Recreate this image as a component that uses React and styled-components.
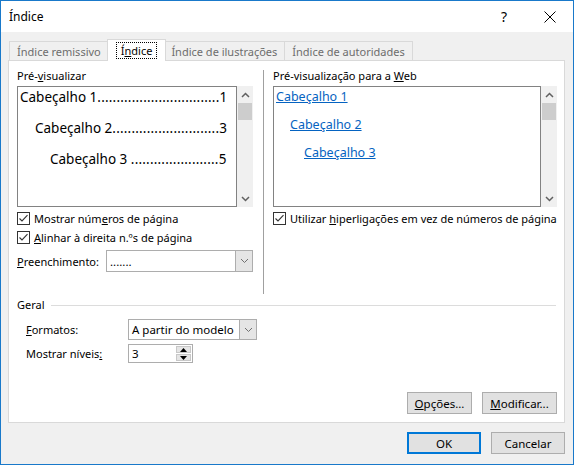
import React from "react";
import styled, { createGlobalStyle, css } from "styled-components";

const GlobalStyle = createGlobalStyle`
  body {
    margin: 0;
    font-family: "Noto Sans", "Open Sans", sans-serif;
    font-size: 11px;
    color: #000;
  }
`;

const Window = styled.div`
  width: 574px;
  height: 465px;
  box-sizing: border-box;
  border: 1px solid #1979ca;
  background: #f0f0f0;
  display: flex;
  flex-direction: column;
`;

const TitleBar = styled.div`
  height: 31px;
  flex: 0 0 31px;
  background: #fff;
  display: flex;
  align-items: center;
  padding-left: 8px;
`;

const TitleText = styled.div`
  flex: 1;
  font-size: 12px;
`;

const TitleButton = styled.div`
  width: 46px;
  height: 31px;
  display: flex;
  align-items: center;
  justify-content: center;
  font-size: 14px;
`;

const Body = styled.div`
  flex: 1;
  display: flex;
  flex-direction: column;
  padding: 0 8px 0 7px;
`;

const TabStrip = styled.div`
  height: 28px;
  flex: 0 0 28px;
  display: flex;
  align-items: flex-end;
  padding-left: 2px;
  position: relative;
  z-index: 1;
`;

const Tab = styled.div`
  height: 19px;
  box-sizing: border-box;
  border: 1px solid #d9d9d9;
  border-bottom: none;
  background: #f0f0f0;
  color: #6d6d6d;
  padding: 0 7px;
  display: flex;
  align-items: center;
  margin-left: -1px;
  ${({ $active }) =>
    $active &&
    css`
      height: 22px;
      margin: 0 -2px -1px -2px;
      padding: 0 8px;
      background: #fff;
      color: #000;
      position: relative;
      z-index: 2;
    `}
`;

const Focus = styled.span`
  border: 1px dotted #000;
  padding: 0 4px;
  line-height: 15px;
`;

const Panel = styled.div`
  flex: 0 0 363px;
  box-sizing: border-box;
  border: 1px solid #d9d9d9;
  background: #fff;
  padding: 7px 6px 8px 8px;
  display: flex;
  flex-direction: column;
`;

const TopSection = styled.div`
  display: flex;
  height: 226px;
`;

const Column = styled.div`
  width: ${({ $w }) => $w}px;
  flex: 0 0 ${({ $w }) => $w}px;
  min-width: 0;
  display: flex;
  flex-direction: column;
`;

const Separator = styled.div`
  width: 1px;
  background: #a0a0a0;
  margin: 2px 9px 0 10px;
`;

const Label = styled.div`
  height: 16px;
  line-height: 16px;
  white-space: nowrap;
`;

const U = styled.span`
  text-decoration: underline;
`;

const PreviewRow = styled.div`
  display: flex;
  height: 121px;
  margin-top: 2px;
`;

const PreviewBox = styled.div`
  flex: 1;
  min-width: 0;
  box-sizing: border-box;
  border: 1px solid #828282;
  display: flex;
  flex-direction: column;
  gap: ${({ $gap }) => $gap}px;
  padding-right: 10px;
`;

const TocLine = styled.div`
  display: flex;
  font-size: 13.5px;
  line-height: 20px;
  padding-left: ${({ $indent }) => $indent}px;
  white-space: nowrap;
`;

const Leader = styled.span`
  flex: 1;
  text-align: right;
  letter-spacing: 0.2px;
`;

const WebLink = styled.a`
  font-size: 12.5px;
  line-height: 19px;
  color: #0563c1;
  text-decoration: underline;
  padding-left: ${({ $indent }) => $indent}px;
  white-space: nowrap;
`;

const Scrollbar = styled.div`
  width: 16px;
  flex: 0 0 16px;
  background: #f0f0f0;
  display: flex;
  flex-direction: column;
  align-items: center;
`;

const ScrollArrow = styled.div`
  height: 17px;
  display: flex;
  align-items: center;
  justify-content: center;
`;

const Thumb = styled.div`
  width: 14px;
  height: 17px;
  background: #cdcdcd;
`;

const ScrollTrack = styled.div`
  flex: 1;
`;

const CheckRow = styled.div`
  display: flex;
  align-items: center;
  gap: 4px;
  height: 19px;
  white-space: nowrap;
  margin-top: ${({ $mt }) => $mt || 0}px;
`;

const Box = styled.div`
  width: 13px;
  height: 13px;
  box-sizing: border-box;
  border: 1px solid #333;
  background: #fff;
  display: flex;
  align-items: center;
  justify-content: center;
`;

const FieldRow = styled.div`
  display: flex;
  align-items: center;
  margin-top: ${({ $mt }) => $mt || 0}px;
  padding-left: ${({ $pl }) => $pl || 0}px;
`;

const FieldLabel = styled.div`
  width: ${({ $w }) => $w}px;
  white-space: nowrap;
`;

const Select = styled.div`
  width: ${({ $w }) => $w}px;
  height: ${({ $h }) => $h}px;
  box-sizing: border-box;
  border: 1px solid #adadad;
  background: #fff;
  display: flex;
  align-items: stretch;
`;

const SelectValue = styled.div`
  flex: 1;
  display: flex;
  align-items: center;
  padding-left: 3px;
  font-size: 11.5px;
`;

const DropButton = styled.div`
  width: 16px;
  background: #e5e5e5;
  border-left: 1px solid #adadad;
  display: flex;
  align-items: center;
  justify-content: center;
`;

const SpinBox = styled.div`
  width: 65px;
  height: 19px;
  box-sizing: border-box;
  border: 1px solid #adadad;
  background: #fff;
  display: flex;
  align-items: stretch;
  padding: 1px 1px 1px 0;
`;

const SpinButtons = styled.div`
  width: 15px;
  display: flex;
  flex-direction: column;
  gap: 1px;
`;

const SpinButton = styled.div`
  flex: 1;
  background: #e5e5e5;
  border: 1px solid #c8c8c8;
  display: flex;
  align-items: center;
  justify-content: center;
`;

const GroupHeader = styled.div`
  display: flex;
  align-items: center;
  gap: 6px;
  margin-top: 3px;
  padding-right: 2px;
`;

const GroupLine = styled.div`
  flex: 1;
  height: 1px;
  background: #dcdcdc;
`;

const ButtonRow = styled.div`
  display: flex;
  justify-content: flex-end;
  gap: 10px;
  margin-top: auto;
  padding-right: 1px;
`;

const Button = styled.div`
  width: ${({ $w }) => $w || 75}px;
  height: 22px;
  box-sizing: border-box;
  border: ${({ $default }) =>
    $default ? "2px solid #0078d7" : "1px solid #adadad"};
  background: #e1e1e1;
  display: flex;
  align-items: center;
  justify-content: center;
  white-space: nowrap;
  font-size: 11.5px;
`;

const Footer = styled.div`
  display: flex;
  justify-content: flex-end;
  gap: 10px;
  padding-top: 9px;
`;

const Check = () => (
  <Box>
    <svg width="11" height="11" viewBox="0 0 11 11">
      <path d="M1.5 5.5 L4 8 L9.5 2.2" fill="none" stroke="#333" strokeWidth="1.1" />
    </svg>
  </Box>
);

const Chevron = ({ up, color = "#606060", w = 1.5 }) => (
  <svg width="9" height="6" viewBox="0 0 9 6">
    <path
      d={up ? "M1 5 L4.5 1.5 L8 5" : "M1 1 L4.5 4.5 L8 1"}
      fill="none"
      stroke={color}
      strokeWidth={w}
    />
  </svg>
);

const Tri = ({ up }) => (
  <svg width="7" height="4" viewBox="0 0 7 4">
    <path d={up ? "M0 4 L3.5 0 L7 4 Z" : "M0 0 L3.5 4 L7 0 Z"} fill="#000" />
  </svg>
);

const ScrollBar = () => (
  <Scrollbar>
    <ScrollArrow>
      <Chevron up />
    </ScrollArrow>
    <Thumb />
    <ScrollTrack />
    <ScrollArrow>
      <Chevron />
    </ScrollArrow>
  </Scrollbar>
);

const tocLines = [
  { label: "Cabeçalho 1", page: "1", indent: 2, dots: 32 },
  { label: "Cabeçalho 2", page: "3", indent: 17, dots: 28 },
  { label: "Cabeçalho 3\u00a0", page: "5", indent: 32, dots: 23 },
];

const webLinks = [
  { label: "Cabeçalho 1", indent: 2 },
  { label: "Cabeçalho 2", indent: 16 },
  { label: "Cabeçalho 3", indent: 30 },
];

export default function App() {
  return (
    <>
      <GlobalStyle />
      <Window>
        <TitleBar>
          <TitleText>Índice</TitleText>
          <TitleButton>?</TitleButton>
          <TitleButton>
            <svg width="12" height="12" viewBox="0 0 12 12">
              <path d="M0.5 0.5 L11.5 11.5 M11.5 0.5 L0.5 11.5" stroke="#000" strokeWidth="1" />
            </svg>
          </TitleButton>
        </TitleBar>
        <Body>
          <TabStrip>
            <Tab>Índice remissivo</Tab>
            <Tab $active>
              <Focus>
                Í<U>n</U>dice
              </Focus>
            </Tab>
            <Tab>Índice de ilustrações</Tab>
            <Tab>Índice de autoridades</Tab>
          </TabStrip>
          <Panel>
            <TopSection>
              <Column $w={236}>
                <Label>
                  Pré-<U>v</U>isualizar
                </Label>
                <PreviewRow>
                  <PreviewBox $gap={11}>
                    {tocLines.map((l) => (
                      <TocLine key={l.label} $indent={l.indent}>
                        <span>{l.label}</span>
                        <Leader>{".".repeat(l.dots)}</Leader>
                        <span>{l.page}</span>
                      </TocLine>
                    ))}
                  </PreviewBox>
                  <ScrollBar />
                </PreviewRow>
                <CheckRow $mt={2}>
                  <Check />
                  <span>
                    Mostrar núm<U>e</U>ros de página
                  </span>
                </CheckRow>
                <CheckRow>
                  <Check />
                  <span>
                    <U>A</U>linhar à direita n.ºs de página
                  </span>
                </CheckRow>
                <FieldRow $mt={3}>
                  <FieldLabel $w={89}>
                    <U>P</U>reenchimento:
                  </FieldLabel>
                  <Select $w={147} $h={22}>
                    <SelectValue>.......</SelectValue>
                    <DropButton>
                      <Chevron color="#707070" w={1} />
                    </DropButton>
                  </Select>
                </FieldRow>
              </Column>
              <Separator />
              <Column $w={284}>
                <Label>
                  Pré-visualização para a <U>W</U>eb
                </Label>
                <PreviewRow>
                  <PreviewBox $gap={9}>
                    {webLinks.map((l) => (
                      <WebLink key={l.label} $indent={l.indent}>
                        {l.label}
                      </WebLink>
                    ))}
                  </PreviewBox>
                  <ScrollBar />
                </PreviewRow>
                <CheckRow $mt={2}>
                  <Check />
                  <span>
                    Utilizar <U>h</U>iperligações em vez de números de página
                  </span>
                </CheckRow>
              </Column>
            </TopSection>
            <GroupHeader>
              <Label>Geral</Label>
              <GroupLine />
            </GroupHeader>
            <FieldRow $mt={6} $pl={9}>
              <FieldLabel $w={102}>
                <U>F</U>ormatos:
              </FieldLabel>
              <Select $w={129} $h={21}>
                <SelectValue>A partir do modelo</SelectValue>
                <DropButton>
                  <Chevron color="#707070" w={1} />
                </DropButton>
              </Select>
            </FieldRow>
            <FieldRow $mt={4} $pl={9}>
              <FieldLabel $w={102}>
                Mostrar níveis<U>:</U>
              </FieldLabel>
              <SpinBox>
                <SelectValue>3</SelectValue>
                <SpinButtons>
                  <SpinButton>
                    <Tri up />
                  </SpinButton>
                  <SpinButton>
                    <Tri />
                  </SpinButton>
                </SpinButtons>
              </SpinBox>
            </FieldRow>
            <ButtonRow>
              <Button $w={65}>
                <span>
                  <U>O</U>pções...
                </span>
              </Button>
              <Button>
                <span>
                  <U>M</U>odificar...
                </span>
              </Button>
            </ButtonRow>
          </Panel>
          <Footer>
            <Button $default $w={74}>
              OK
            </Button>
            <Button $w={74}>Cancelar</Button>
          </Footer>
        </Body>
      </Window>
    </>
  );
}
